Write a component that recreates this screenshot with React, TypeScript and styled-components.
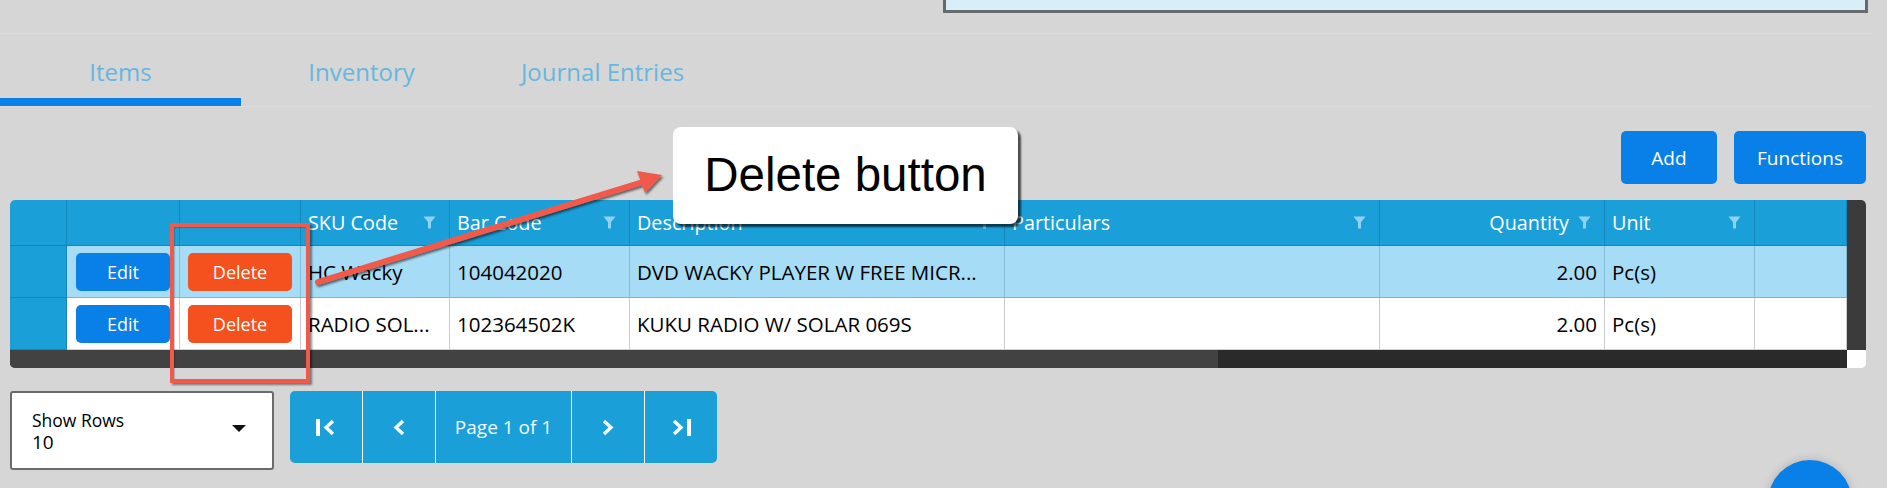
import React from "react";
import styled, { createGlobalStyle } from "styled-components";

const GlobalStyle = createGlobalStyle`
  html, body {
    margin: 0;
    padding: 0;
    background: #d6d6d6;
    font-family: "Open Sans", "Noto Sans", sans-serif;
  }
`;

const Page = styled.div`
  position: relative;
  width: 1887px;
  height: 488px;
  overflow: hidden;
  background: #d6d6d6;
`;

const TopStrip = styled.div`
  display: flex;
  justify-content: flex-end;
  padding-right: 19px;
`;

const InfoBox = styled.div`
  width: 919px;
  height: 10px;
  background: #d8eff8;
  border: 3px solid #666a6a;
  border-top: none;
`;

const TabBar = styled.div`
  margin-top: 20px;
  margin-right: 14px;
  display: flex;
  border-top: 1px solid #dcdcdc;
  border-bottom: 1px solid #dcdcdc;
`;

const Tab = styled.div<{ $active?: boolean }>`
  width: 241px;
  height: 72px;
  box-sizing: border-box;
  display: flex;
  align-items: center;
  justify-content: center;
  padding-top: 11px;
  font-size: 24px;
  color: #66b7de;
  border-bottom: 8px solid ${(p) => (p.$active ? "#0980e8" : "transparent")};
`;

const Content = styled.div`
  padding: 0 21px 0 10px;
`;

const Toolbar = styled.div`
  display: flex;
  justify-content: flex-end;
  gap: 17px;
  padding-top: 24px;
`;

const ToolButton = styled.button<{ $width: number }>`
  width: ${(p) => p.$width}px;
  height: 53px;
  border: none;
  border-radius: 5px;
  background: #0980e8;
  color: #ffffff;
  font-family: inherit;
  font-size: 19px;
  padding: 0;
`;

const TableFrame = styled.div`
  margin-top: 16px;
  display: grid;
  grid-template-columns: 1fr 19px;
  grid-template-rows: auto 18px;
  border-radius: 5px;
  overflow: hidden;
  background: #ffffff;
`;

const COLS = "57px 113px 121px 149px 180px 375px 375px 225px 150px 1fr";

const HeaderRow = styled.div`
  display: grid;
  grid-template-columns: ${COLS};
  height: 46px;
  background: #1a9fd9;
  border-bottom: 1px solid #1486bd;
  box-sizing: border-box;
`;

const HeaderCell = styled.div<{ $right?: boolean }>`
  display: flex;
  align-items: center;
  justify-content: ${(p) => (p.$right ? "flex-end" : "space-between")};
  gap: 9px;
  padding: 0 13px 0 7px;
  border-right: 1px solid #1486bd;
  color: #ffffff;
  font-size: 19.8px;
  white-space: nowrap;
  overflow: hidden;
`;

const BodyRow = styled.div<{ $selected?: boolean }>`
  display: grid;
  grid-template-columns: ${COLS};
  height: 52px;
  box-sizing: border-box;
  background: ${(p) => (p.$selected ? "#a6dcf5" : "#ffffff")};
  border-bottom: 1px solid ${(p) => (p.$selected ? "#7eb3cf" : "#cfcfcf")};
`;

const RowHead = styled.div`
  background: #1a9fd9;
  border-right: 1px solid #1486bd;
  margin-bottom: -1px;
  border-bottom: 1px solid #1486bd;
`;

const Cell = styled.div<{ $selected?: boolean; $right?: boolean; $center?: boolean }>`
  display: flex;
  align-items: center;
  justify-content: ${(p) => (p.$center ? "center" : p.$right ? "flex-end" : "flex-start")};
  padding: 0 7px;
  border-right: 1px solid ${(p) => (p.$selected ? "#86bbd6" : "#cccccc")};
  color: #000000;
  font-size: 20.5px;
  white-space: nowrap;
  overflow: hidden;
`;

const RowButton = styled.button<{ $kind: "edit" | "delete"; $width: number }>`
  width: ${(p) => p.$width}px;
  height: 38px;
  border: none;
  border-radius: 5px;
  background: ${(p) => (p.$kind === "edit" ? "#0980e8" : "#f4511e")};
  color: #ffffff;
  font-family: inherit;
  font-size: 18px;
  padding: 0;
`;

const VScroll = styled.div`
  background: #3b3b3b;
`;

const HScroll = styled.div`
  background: #2a2a2a;
  display: flex;
`;

const HThumb = styled.div`
  background: #424242;
  height: 100%;
`;

const Corner = styled.div`
  background: #ffffff;
`;

const Footer = styled.div`
  margin-top: 23px;
  display: flex;
  align-items: flex-start;
  gap: 16px;
`;

const RowsSelect = styled.div`
  width: 264px;
  height: 79px;
  box-sizing: border-box;
  border: 2px solid #6b6b6b;
  border-radius: 3px;
  background: #ffffff;
  display: flex;
  align-items: center;
  justify-content: space-between;
  padding: 0 26px 0 20px;
`;

const SelectText = styled.div`
  display: flex;
  flex-direction: column;
  color: #000000;
  padding-top: 2px;
`;

const SelectLabel = styled.span`
  font-size: 17.5px;
  line-height: 22px;
`;

const SelectValue = styled.span`
  font-size: 19px;
  line-height: 23px;
`;

const Caret = styled.div`
  width: 0;
  height: 0;
  border-left: 7px solid transparent;
  border-right: 7px solid transparent;
  border-top: 7px solid #111111;
  margin-top: -4px;
`;

const Pager = styled.div`
  display: flex;
  height: 72px;
  border-radius: 5px;
  overflow: hidden;
  background: #1a9fd9;
`;

const PagerPart = styled.div<{ $width: number }>`
  width: ${(p) => p.$width}px;
  box-sizing: border-box;
  display: flex;
  align-items: center;
  justify-content: center;
  color: #f2f9ff;
  font-size: 19px;
  border-left: 1px solid #ffffff;
  &:first-child {
    border-left: none;
  }
`;

const Callout = styled.div`
  position: absolute;
  left: 673px;
  top: 127px;
  width: 345px;
  height: 97px;
  box-sizing: border-box;
  background: #ffffff;
  border-radius: 8px;
  box-shadow: 3px 3px 2px rgba(0, 0, 0, 0.65);
  display: flex;
  align-items: center;
  justify-content: center;
  font-family: "Liberation Sans", Arial, sans-serif;
  font-size: 47.5px;
  color: #000000;
  padding-bottom: 2px;
`;

const HighlightBox = styled.div`
  position: absolute;
  left: 170px;
  top: 223px;
  width: 140px;
  height: 160px;
  box-sizing: border-box;
  border: 4px solid #f15a4b;
  box-shadow: 2px 2px 2px rgba(0, 0, 0, 0.45), inset 1px 1px 1px rgba(0, 0, 0, 0.2);
`;

const ArrowLayer = styled.svg`
  position: absolute;
  left: 0;
  top: 0;
  pointer-events: none;
`;

const Fab = styled.div`
  position: absolute;
  left: 1768px;
  top: 460px;
  width: 84px;
  height: 84px;
  border-radius: 50%;
  background: #0980e8;
  box-shadow: 0 0 10px rgba(0, 0, 0, 0.18);
`;

const Funnel = () => (
  <svg width="13" height="13" viewBox="0 0 13 13">
    <path d="M0.5 0.5 H12.5 L8 6.2 V12.5 H5 V6.2 Z" fill="#8fd2f2" />
  </svg>
);

const Chevron = ({ dir, bar }: { dir: "left" | "right"; bar?: boolean }) => (
  <svg width="22" height="20" viewBox="0 0 22 20">
    {dir === "left" ? (
      <>
        {bar && <rect x="1" y="2" width="4" height="17" fill="#fff" />}
        <polyline
          points={bar ? "18,4 11,10.5 18,17" : "15,4 8,10.5 15,17"}
          fill="none"
          stroke="#fff"
          strokeWidth="3.4"
        />
      </>
    ) : (
      <>
        <polyline
          points={bar ? "4,4 11,10.5 4,17" : "7,4 14,10.5 7,17"}
          fill="none"
          stroke="#fff"
          strokeWidth="3.4"
        />
        {bar && <rect x="17" y="2" width="4" height="17" fill="#fff" />}
      </>
    )}
  </svg>
);

type Column = { label: string; right?: boolean; filter?: boolean };

const columns: Column[] = [
  { label: "" },
  { label: "" },
  { label: "" },
  { label: "SKU Code", filter: true },
  { label: "Bar Code", filter: true },
  { label: "Description", filter: true },
  { label: "Particulars", filter: true },
  { label: "Quantity", right: true, filter: true },
  { label: "Unit", filter: true },
  { label: "" },
];

const rows = [
  {
    sku: "HC Wacky",
    bar: "104042020",
    desc: "DVD WACKY PLAYER W FREE MICR...",
    particulars: "",
    qty: "2.00",
    unit: "Pc(s)",
  },
  {
    sku: "RADIO SOL...",
    bar: "102364502K",
    desc: "KUKU RADIO W/ SOLAR 069S",
    particulars: "",
    qty: "2.00",
    unit: "Pc(s)",
  },
];

const tabs = ["Items", "Inventory", "Journal Entries"];

const App = () => {
  const thumbWidth = 1208;

  return (
    <Page>
      <GlobalStyle />
      <TopStrip>
        <InfoBox />
      </TopStrip>
      <TabBar>
        {tabs.map((t, i) => (
          <Tab key={t} $active={i === 0}>
            {t}
          </Tab>
        ))}
      </TabBar>
      <Content>
        <Toolbar>
          <ToolButton $width={96}>Add</ToolButton>
          <ToolButton $width={132}>Functions</ToolButton>
        </Toolbar>
        <TableFrame>
          <div>
            <HeaderRow>
              {columns.map((c, i) => (
                <HeaderCell key={i} $right={c.right}>
                  {c.label && <span>{c.label}</span>}
                  {c.filter && <Funnel />}
                </HeaderCell>
              ))}
            </HeaderRow>
            {rows.map((r, i) => {
              const sel = i === 0;
              return (
                <BodyRow key={i} $selected={sel}>
                  <RowHead />
                  <Cell $selected={sel} $center>
                    <RowButton $kind="edit" $width={94}>
                      Edit
                    </RowButton>
                  </Cell>
                  <Cell $selected={sel} $center>
                    <RowButton $kind="delete" $width={104}>
                      Delete
                    </RowButton>
                  </Cell>
                  <Cell $selected={sel}>{r.sku}</Cell>
                  <Cell $selected={sel}>{r.bar}</Cell>
                  <Cell $selected={sel}>{r.desc}</Cell>
                  <Cell $selected={sel}>{r.particulars}</Cell>
                  <Cell $selected={sel} $right>
                    {r.qty}
                  </Cell>
                  <Cell $selected={sel}>{r.unit}</Cell>
                  <Cell $selected={sel} />
                </BodyRow>
              );
            })}
          </div>
          <VScroll />
          <HScroll>
            <HThumb style={{ width: thumbWidth }} />
          </HScroll>
          <Corner />
        </TableFrame>
        <Footer>
          <RowsSelect>
            <SelectText>
              <SelectLabel>Show Rows</SelectLabel>
              <SelectValue>10</SelectValue>
            </SelectText>
            <Caret />
          </RowsSelect>
          <Pager>
            <PagerPart $width={72}>
              <Chevron dir="left" bar />
            </PagerPart>
            <PagerPart $width={73}>
              <Chevron dir="left" />
            </PagerPart>
            <PagerPart $width={136}>Page 1 of 1</PagerPart>
            <PagerPart $width={73}>
              <Chevron dir="right" />
            </PagerPart>
            <PagerPart $width={73}>
              <Chevron dir="right" bar />
            </PagerPart>
          </Pager>
        </Footer>
      </Content>

      <HighlightBox />
      <ArrowLayer width="1887" height="488">
        <defs>
          <filter id="arrowShadow" x="-10%" y="-30%" width="120%" height="160%">
            <feDropShadow dx="1.5" dy="2" stdDeviation="1.2" floodColor="#000" floodOpacity="0.55" />
          </filter>
        </defs>
        <g filter="url(#arrowShadow)">
          <line x1="318" y1="282" x2="646" y2="181" stroke="#f15a4b" strokeWidth="6" strokeLinecap="round" />
          <polygon points="662,175 637,171 645,193" fill="#f15a4b" />
        </g>
      </ArrowLayer>
      <Callout>Delete button</Callout>
      <Fab />
    </Page>
  );
};

export default App;
